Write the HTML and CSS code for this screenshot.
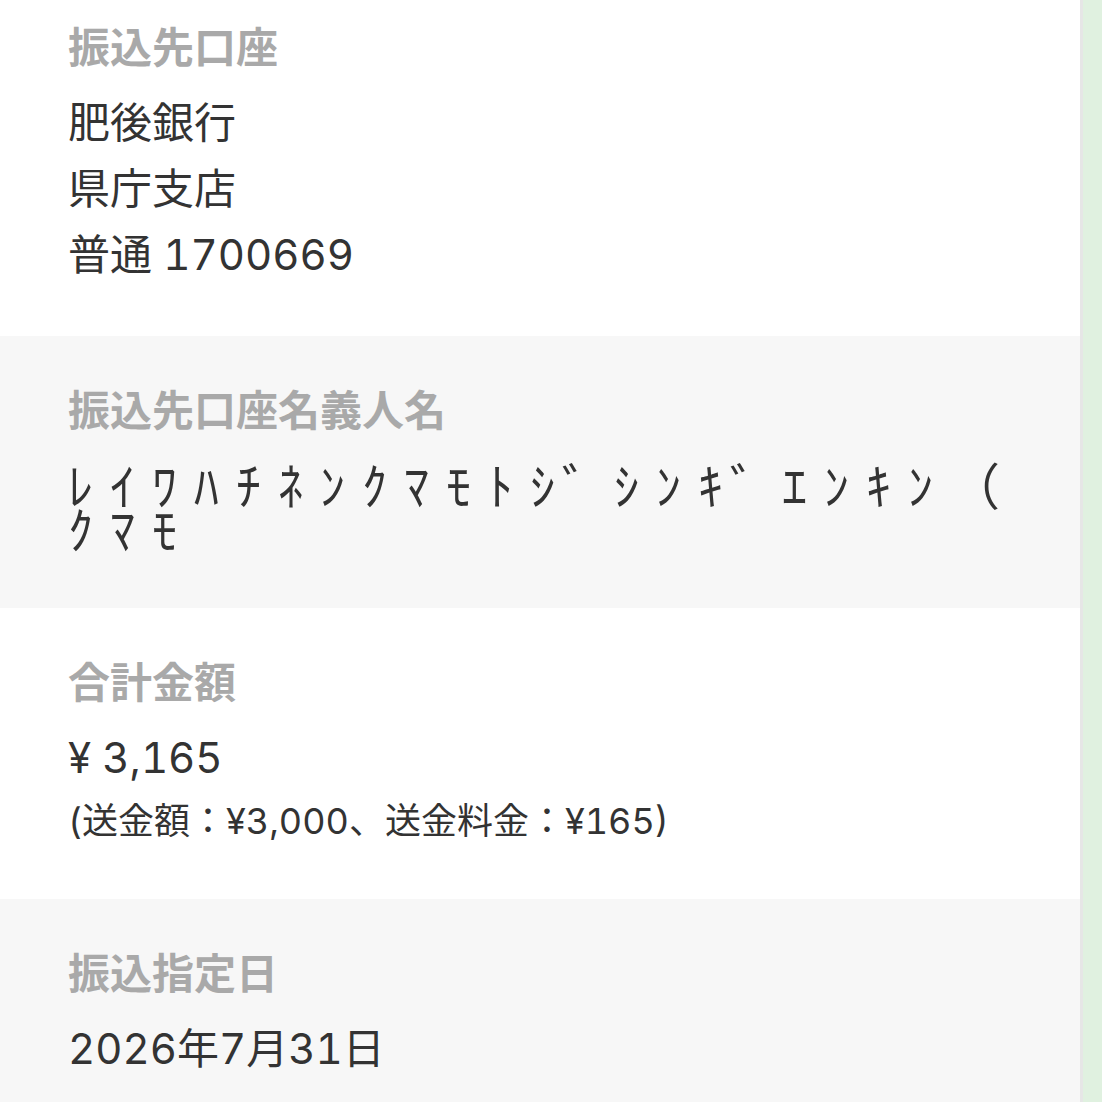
FILE: index.html
```html
<!DOCTYPE html>
<html lang="ja">
<head>
  <meta charset="UTF-8" />
  <meta name="viewport" content="width=device-width, initial-scale=1.0" />
  <title>振込内容の確認</title>
  <link rel="stylesheet" href="styles.css">
</head>
<body>
  <div class="layout">
    <main class="confirm">
      <section class="item item-first">
        <h2 class="label">振込先口座</h2>
        <p class="value">肥後銀行</p>
        <p class="value">県庁支店</p>
        <p class="value">普通 1700669</p>
      </section>

      <section class="item item-gray">
        <h2 class="label">振込先口座名義人名</h2>
        <p class="value kana">ﾚｲﾜﾊﾁﾈﾝｸﾏﾓﾄｼ<span class="mark">゛</span>ｼﾝｷ<span class="mark">゛</span>ｴﾝｷﾝ（ｸﾏﾓ</p>
      </section>

      <section class="item">
        <h2 class="label">合計金額</h2>
        <p class="value">¥ 3,165</p>
        <p class="note">(送金額：¥3,000、送金料金：¥165)</p>
      </section>

      <section class="item item-gray">
        <h2 class="label">振込指定日</h2>
        <p class="value">2026年7月31日</p>
      </section>
    </main>
    <aside class="side"></aside>
  </div>
</body>
</html>
```

FILE: styles.css
```css
body {
  margin: 0;
  padding: 0;
  background: #fff;
  font-family: Inter, "Noto Sans CJK JP", sans-serif;
  font-feature-settings: "tnum";
  color: #333;
}
.layout {
  display: flex;
  min-height: 100vh;
}
.confirm {
  flex: 1;
}
.side {
  width: 19px;
  background: #e0f1e0;
  border-left: 3px solid #e6e6e6;
}
.item {
  padding: 46px 56px 48px 68px;
  background: #fff;
}
.item-first {
  padding-top: 19px;
}
.item-gray {
  background: #f7f7f7;
}
.label {
  margin: 0 0 19px;
  font-family: "Noto Sans CJK JP", sans-serif;
  font-size: 42px;
  line-height: 52px;
  font-weight: bold;
  color: #a9a9a9;
}
.value {
  margin: 0;
  font-size: 42px;
  line-height: 66px;
}
/* half-width kana, spaced out to full-width cells */
.kana {
  margin: 31px 0 7px;
  font-size: 50px;
  line-height: 44px;
  letter-spacing: 17px;
  line-break: anywhere;
  word-break: break-all;
}
/* voiced mark as its own narrow cell, pulled toward the kana before it */
.kana .mark {
  margin-left: -10px;
  letter-spacing: 2px;
}
.note {
  margin: 0;
  font-size: 36px;
  line-height: 60px;
}
```
